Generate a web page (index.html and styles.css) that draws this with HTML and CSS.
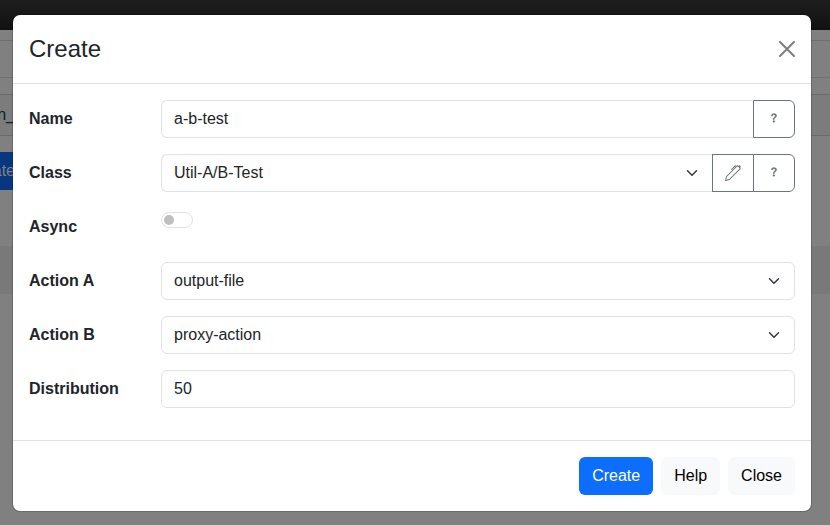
FILE: index.html
```html
<!DOCTYPE html>
<html lang="en">
<head>
<meta charset="utf-8">
<title>Create</title>
<link rel="stylesheet" href="styles.css">
</head>
<body>
<div class="page">
  <div class="navbar"></div>
  <div class="tabs"></div>
  <div class="filter"><span>n_</span></div>
  <div class="toolbar"><span>ate</span></div>
  <div class="list-head"></div>
</div>
<div class="modal">
  <header class="modal-header">
    <h4>Create</h4>
    <svg class="close" viewBox="0 0 16 16"><path d="M.293.293a1 1 0 0 1 1.414 0L8 6.586 14.293.293a1 1 0 1 1 1.414 1.414L9.414 8l6.293 6.293a1 1 0 0 1-1.414 1.414L8 9.414l-6.293 6.293a1 1 0 0 1-1.414-1.414L6.586 8 .293 1.707a1 1 0 0 1 0-1.414z"/></svg>
  </header>
  <main class="modal-body">
    <div class="row">
      <label>Name</label>
      <div class="group">
        <div class="control">a-b-test</div>
        <button class="addon"><svg class="question" viewBox="0 0 16 16"><path d="M5.255 5.786a.237.237 0 0 0 .241.247h.825c.138 0 .248-.113.266-.25.09-.656.54-1.134 1.342-1.134.686 0 1.314.343 1.314 1.168 0 .635-.374.927-.965 1.371-.673.489-1.206 1.06-1.168 1.987l.003.217a.25.25 0 0 0 .25.246h.811a.25.25 0 0 0 .25-.25v-.105c0-.718.273-.927 1.01-1.486.609-.463 1.244-.977 1.244-2.056 0-1.511-1.276-2.241-2.673-2.241-1.267 0-2.655.59-2.75 2.286m1.557 5.763c0 .533.425.927 1.01.927.609 0 1.028-.394 1.028-.927 0-.552-.42-.94-1.029-.94-.584 0-1.009.388-1.009.94"/></svg></button>
      </div>
    </div>
    <div class="row">
      <label>Class</label>
      <div class="group">
        <div class="control">Util-A/B-Test<svg class="chevron" viewBox="0 0 16 16"><path d="m2 5 6 6 6-6"/></svg></div>
        <button class="addon"><svg viewBox="0 0 16 16"><path d="m13.498.795.149-.149a1.207 1.207 0 1 1 1.707 1.708l-.149.148a1.5 1.5 0 0 1-.059 2.059L4.854 14.854a.5.5 0 0 1-.233.131l-4 1a.5.5 0 0 1-.606-.606l1-4a.5.5 0 0 1 .131-.232l9.642-9.642a.5.5 0 0 0-.642.056L6.854 4.854a.5.5 0 1 1-.708-.708L9.44.854A1.5 1.5 0 0 1 11.5.796a1.5 1.5 0 0 1 1.998-.001m-.644.766a.5.5 0 0 0-.707 0L1.95 11.756l-.764 3.057 3.057-.764L14.44 3.854a.5.5 0 0 0 0-.708z"/></svg></button>
        <button class="addon"><svg class="question" viewBox="0 0 16 16"><path d="M5.255 5.786a.237.237 0 0 0 .241.247h.825c.138 0 .248-.113.266-.25.09-.656.54-1.134 1.342-1.134.686 0 1.314.343 1.314 1.168 0 .635-.374.927-.965 1.371-.673.489-1.206 1.06-1.168 1.987l.003.217a.25.25 0 0 0 .25.246h.811a.25.25 0 0 0 .25-.25v-.105c0-.718.273-.927 1.01-1.486.609-.463 1.244-.977 1.244-2.056 0-1.511-1.276-2.241-2.673-2.241-1.267 0-2.655.59-2.75 2.286m1.557 5.763c0 .533.425.927 1.01.927.609 0 1.028-.394 1.028-.927 0-.552-.42-.94-1.029-.94-.584 0-1.009.388-1.009.94"/></svg></button>
      </div>
    </div>
    <div class="row">
      <label>Async</label>
      <div class="group"><div class="switch"><i></i></div></div>
    </div>
    <div class="row">
      <label>Action A</label>
      <div class="group"><div class="control">output-file<svg class="chevron" viewBox="0 0 16 16"><path d="m2 5 6 6 6-6"/></svg></div></div>
    </div>
    <div class="row">
      <label>Action B</label>
      <div class="group"><div class="control">proxy-action<svg class="chevron" viewBox="0 0 16 16"><path d="m2 5 6 6 6-6"/></svg></div></div>
    </div>
    <div class="row">
      <label>Distribution</label>
      <div class="group"><div class="control">50</div></div>
    </div>
  </main>
  <footer class="modal-footer">
    <button class="btn primary">Create</button>
    <button class="btn">Help</button>
    <button class="btn">Close</button>
  </footer>
</div>
</body>
</html>
```
FILE: styles.css
```css
* { box-sizing: border-box; }
body {
  margin: 0;
  height: 525px;
  overflow: hidden;
  font: 16px/24px "Liberation Sans", Arial, sans-serif;
  color: #212529;
  background: #808080;
}
.page { height: 525px; }
.navbar { height: 30px; background: linear-gradient(#1e1e1e, #111); }
.tabs {
  height: 38px;
  margin-top: 10px;
  border-top: 1px solid #6f6f70;
  border-bottom: 1px solid #6f6f70;
}
.filter {
  height: 42px;
  margin-top: 16px;
  padding-top: 8px;
  border-top: 1px solid #6a6a6a;
  border-bottom: 1px solid #6a6a6a;
  background: #7c7c7c;
}
.filter span, .toolbar span {
  display: flex;
  justify-content: flex-end;
  width: 15px;
}
.filter span { color: #06202c; }
.toolbar {
  width: 26px;
  height: 38px;
  margin-top: 16px;
  padding-top: 7px;
  background: #07377f;
  color: #808080;
}
.list-head { height: 48px; margin-top: 56px; background: #797979; }
.modal {
  position: absolute;
  top: 14px;
  left: 12px;
  width: 800px;
  border: 1px solid rgba(0, 0, 0, .175);
  border-radius: 8px;
  background: #fff;
  background-clip: padding-box;
}
.modal-header {
  display: flex;
  justify-content: space-between;
  align-items: center;
  padding: 16px;
  border-bottom: 1px solid #dee2e6;
}
h4 { margin: 0; font-size: 24px; font-weight: 400; line-height: 36px; }
.close { width: 16px; height: 16px; opacity: .5; }
.modal-body { padding: 16px 16px 16px; }
.row { display: flex; height: 38px; margin-bottom: 16px; }
label { width: 132px; padding-top: 7px; font-weight: 700; }
.group { display: flex; flex: 1; }
.control {
  display: flex;
  flex: 1;
  justify-content: space-between;
  align-items: center;
  padding: 0 12px;
  border: 1px solid #dee2e6;
  border-radius: 6px;
}
.control:not(:last-child) { border-right: 0; border-radius: 6px 0 0 6px; }
.chevron {
  width: 16px;
  height: 12px;
  fill: none;
  stroke: #343a40;
  stroke-width: 2;
  stroke-linecap: round;
  stroke-linejoin: round;
}
.addon {
  display: flex;
  justify-content: center;
  align-items: center;
  width: 42px;
  padding: 0;
  border: 1px solid #6c757d;
  background: #fff;
}
.addon + .addon { margin-left: -1px; }
.addon:last-child { border-radius: 0 6px 6px 0; }
.addon svg { width: 16px; height: 16px; margin-bottom: 1px; fill: #6c757d; }
.addon .question { margin-bottom: 2px; stroke: #6c757d; stroke-width: .3; }
.switch {
  width: 32px;
  height: 16px;
  margin-top: 4px;
  padding: 3px 2px;
  border: 1px solid #dee2e6;
  border-radius: 8px;
}
.switch i { display: block; width: 10px; height: 10px; margin-top: -1px; border-radius: 50%; background: #bfbfbf; }
.modal-footer {
  display: flex;
  justify-content: flex-end;
  gap: 8px;
  padding: 16px;
  border-top: 1px solid #dee2e6;
}
.btn {
  height: 38px;
  padding: 0 13px 1px;
  border: 0;
  border-radius: 6px;
  background: #f8f9fa;
  color: #000;
  font: inherit;
}
.primary { background: #0d6efd; color: #fff; }
```
